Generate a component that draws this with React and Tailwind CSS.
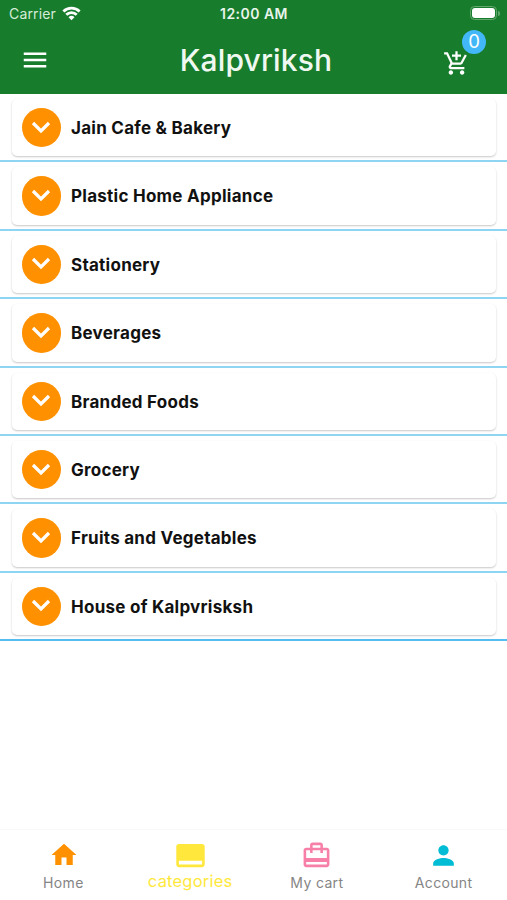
import {
  MdMenu,
  MdAddShoppingCart,
  MdHome,
  MdCallToAction,
  MdCardTravel,
  MdPerson,
} from "react-icons/md";

const categories = [
  "Jain Cafe & Bakery",
  "Plastic Home Appliance",
  "Stationery",
  "Beverages",
  "Branded Foods",
  "Grocery",
  "Fruits and Vegetables",
  "House of Kalpvrisksh",
];

function StatusBar() {
  return (
    <div className="grid h-[27px] grid-cols-3 items-center pl-[9px] pr-[7px] text-[14px] leading-none">
      <div className="flex items-center gap-[6px] text-[#d5ecd8]">
        <span className="pt-px tracking-[0.15px]">Carrier</span>
        <svg width="19" height="15" viewBox="0 0 19 15" fill="none" stroke="white" strokeWidth="2.8">
          <path d="M1.4 5.4a11.5 11.5 0 0 1 16.2 0" />
          <path d="M4.3 8.7a7.4 7.4 0 0 1 10.4 0" />
          <path d="M9.5 14.3 6.5 11.3a4.3 4.3 0 0 1 6 0Z" fill="white" stroke="none" />
        </svg>
      </div>
      <div className="-ml-[1px] pt-px text-center text-[14px] font-semibold tracking-[0.45px] text-[#e8f5ea]">12:00 AM</div>
      <div className="flex items-center justify-end gap-px">
        <div className="-mt-px h-[14px] w-[27px] rounded-[4.5px] border border-[#62a76d] p-[1px]">
          <div className="h-full rounded-[3px] bg-white" />
        </div>
        <div className="h-[5px] w-[2px] rounded-r-full bg-[#62a76d]" />
      </div>
    </div>
  );
}

function Header() {
  return (
    <header className="h-[93.5px] shrink-0 bg-[#187c2d] text-white">
      <StatusBar />
      <div className="grid h-[66px] grid-cols-[100px_1fr_100px] items-center">
        <MdMenu className="ml-5 size-[30px]" />
        <h1 className="pb-px pl-[5px] text-center text-[30px] font-medium leading-none tracking-[0.15px] text-[#f0f9f1]">
          Kalpvriksh
        </h1>
        <div className="relative ml-[36px] mt-[6px] size-[27px]">
          <MdAddShoppingCart className="size-[27px]" />
          <span className="absolute -top-[20px] left-[19px] flex size-[24px] items-center justify-center rounded-full bg-[#42b8f8] text-[18.5px] leading-none">
            0
          </span>
        </div>
      </div>
    </header>
  );
}

function CategoryRow({ name }) {
  return (
    <li className="h-[68.4px] border-b-2 border-[#8dd5f3] px-[11.5px] pb-[4px] pt-[5px] last:border-[#55bdf1]">
      <div className="flex h-full items-center rounded-[5px] bg-white pl-[10px] shadow-[0_1px_2px_rgba(0,0,0,0.22)]">
        <span className="flex size-[39.5px] shrink-0 items-center justify-center rounded-full bg-[#ff9100]">
          <svg width="20" height="14" viewBox="0 0 20 14" fill="none" stroke="white" strokeWidth="3.2">
            <path d="M2 2 10 10 18 2" />
          </svg>
        </span>
        <span className="ml-[10px] whitespace-nowrap pt-[2px] text-[17px] font-bold tracking-[0.26px] text-[#111]">{name}</span>
      </div>
    </li>
  );
}

function Tab({ icon, label, active }) {
  return (
    <div className="flex flex-1 flex-col items-center">
      <div className="flex h-[50px] items-center justify-center">{icon}</div>
      {active ? (
        <span className="-mt-[10px] text-[16.5px] leading-[22px] tracking-[0.2px] text-[#ffe83b]">{label}</span>
      ) : (
        <span className="-mt-[7px] text-[14px] leading-[20px] tracking-[0.35px] text-[#858585]">{label}</span>
      )}
    </div>
  );
}

export default function App() {
  return (
    <div className="flex h-[900px] w-[507px] flex-col overflow-hidden bg-white font-['Inter','Liberation_Sans',sans-serif]">
      <Header />
      <ul className="flex-1 pt-[0.5px]">
        {categories.map((name) => (
          <CategoryRow key={name} name={name} />
        ))}
      </ul>
      <nav className="flex h-[71px] shrink-0 border-t border-[#f8f8f8] bg-white">
        <Tab label="Home" icon={<MdHome className="ml-px size-[30px] text-[#ff9100]" />} />
        <Tab label="categories" active icon={<MdCallToAction className="size-[31px] text-[#ffe83b]" />} />
        <Tab label="My cart" icon={<MdCardTravel className="size-[31px] text-[#f780a8]" />} />
        <Tab label="Account" icon={<MdPerson className="size-[31px] text-[#00bcd4]" />} />
      </nav>
    </div>
  );
}
